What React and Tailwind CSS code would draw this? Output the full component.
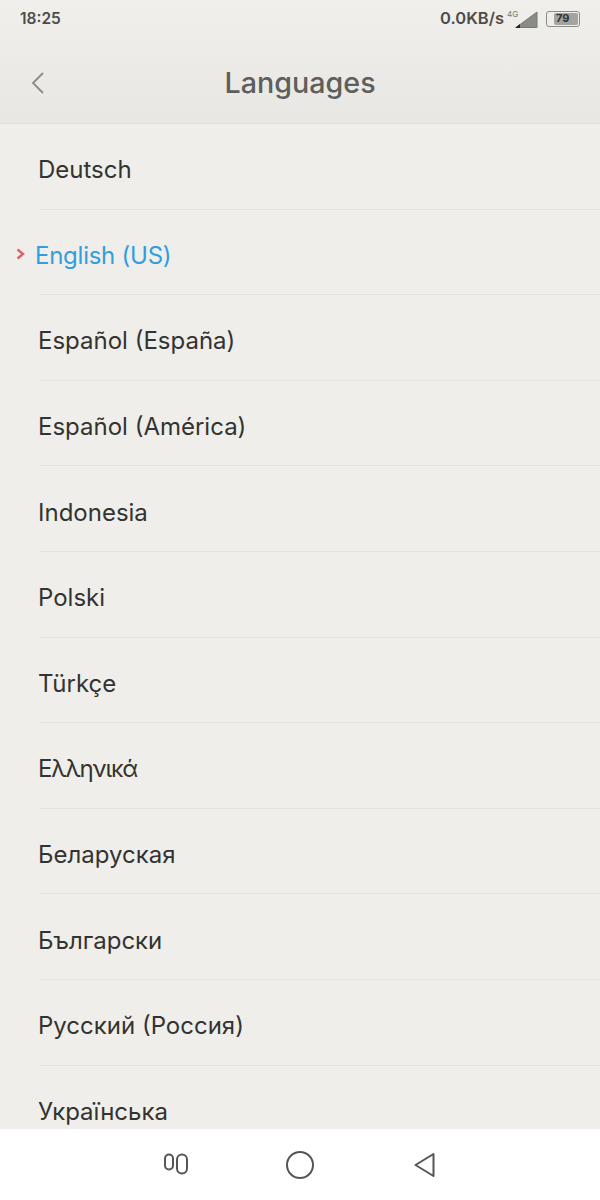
const langs = [
  "Deutsch",
  "English (US)",
  "Español (España)",
  "Español (América)",
  "Indonesia",
  "Polski",
  "Türkçe",
  "Ελληνικά",
  "Беларуская",
  "Български",
  "Русский (Россия)",
  "Українська",
];

export default function App() {
  return (
    <div className="w-[600px] h-[1200px] overflow-hidden flex flex-col bg-[#efeeea] font-['Inter',sans-serif] text-[#333331]">
      <header className="h-[124px] shrink-0 flex flex-col bg-gradient-to-b from-[#f0efeb] to-[#e8e7e3] border-b border-[#e0dfdb]">
        <div className="h-[37px] shrink-0 flex items-center justify-between pl-[20px] pr-[20px] text-[#4c4c4a]">
          <span className="text-[15.5px] font-semibold">18:25</span>
          <div className="flex items-center">
            <span className="text-[16.5px] font-semibold">0.0KB/s</span>
            <svg width="34" height="20" viewBox="0 0 34 20">
              <text x="3" y="8" fontSize="8" fill="#777">4G</text>
              <path d="M12 18.5 L33 3 L33 18.5 Z" fill="#8a8a87" stroke="#777" strokeWidth="1" />
              <path d="M11 19 L16 15 L16 19 Z" fill="#222" />
            </svg>
            <div className="ml-[8px] w-[34px] h-[16px] rounded-[3px] border border-[#8c8c89] flex items-center p-[1px]">
              <div className="ml-[6px] flex-1 h-full rounded-[2px] bg-[#a3a3a0] flex items-center pl-[2px] text-[11px] font-bold text-[#333]">79</div>
            </div>
          </div>
        </div>
        <div className="flex-1 grid grid-cols-[1fr_auto_1fr] items-center pt-[5px]">
          <svg width="16" height="24" viewBox="0 0 16 24" className="ml-[30px]">
            <path d="M13 2 L3 12 L13 22" fill="none" stroke="#8a8a88" strokeWidth="1.8" />
          </svg>
          <h1 className="text-[28.7px] font-medium text-[#5e5e5c]">Languages</h1>
        </div>
      </header>

      <main className="flex-1 overflow-hidden">
        {langs.map((l, i) => (
          <div
            key={l}
            className={`relative ml-[40px] h-[85.6px] flex items-center text-[24px] pt-[8px] ${i === 11 ? "" : "border-b border-[#e4e3df]"}`}
          >
            {i === 1 ? (
              <>
                <svg width="9" height="12" viewBox="0 0 9 12" className="absolute left-[-24px] top-[38px]">
                  <path d="M1.5 1.5 L7 6 L1.5 10.5" fill="none" stroke="#d9626c" strokeWidth="2.4" />
                </svg>
                <span className="ml-[-5px] tracking-[-0.25px] text-[#2f9fdf]">{l}</span>
              </>
            ) : i === 7 ? (
              <span className="ml-[-2px] tracking-[-1.2px]">{l}</span>
            ) : (
              <span className="ml-[-2px]">{l}</span>
            )}
          </div>
        ))}
      </main>

      <nav className="h-[71px] shrink-0 bg-white flex items-center justify-center">
        <div className="w-[125px] flex justify-center">
          <svg width="26" height="26" viewBox="0 0 26 26">
            <rect x="3" y="2.5" width="8" height="15" rx="4" fill="none" stroke="#555" strokeWidth="2" />
            <rect x="15" y="2.5" width="10" height="19" rx="5" fill="none" stroke="#555" strokeWidth="2" />
          </svg>
        </div>
        <div className="w-[125px] flex justify-center">
          <svg width="30" height="30" viewBox="0 0 30 30">
            <circle cx="15" cy="15" r="13" fill="none" stroke="#555" strokeWidth="2" />
          </svg>
        </div>
        <div className="w-[125px] flex justify-center">
          <svg width="24" height="26" viewBox="0 0 24 26">
            <path d="M20.5 2 L2.5 13 L20.5 24 Z" fill="none" stroke="#555" strokeWidth="2" strokeLinejoin="round" />
          </svg>
        </div>
      </nav>
    </div>
  );
}
